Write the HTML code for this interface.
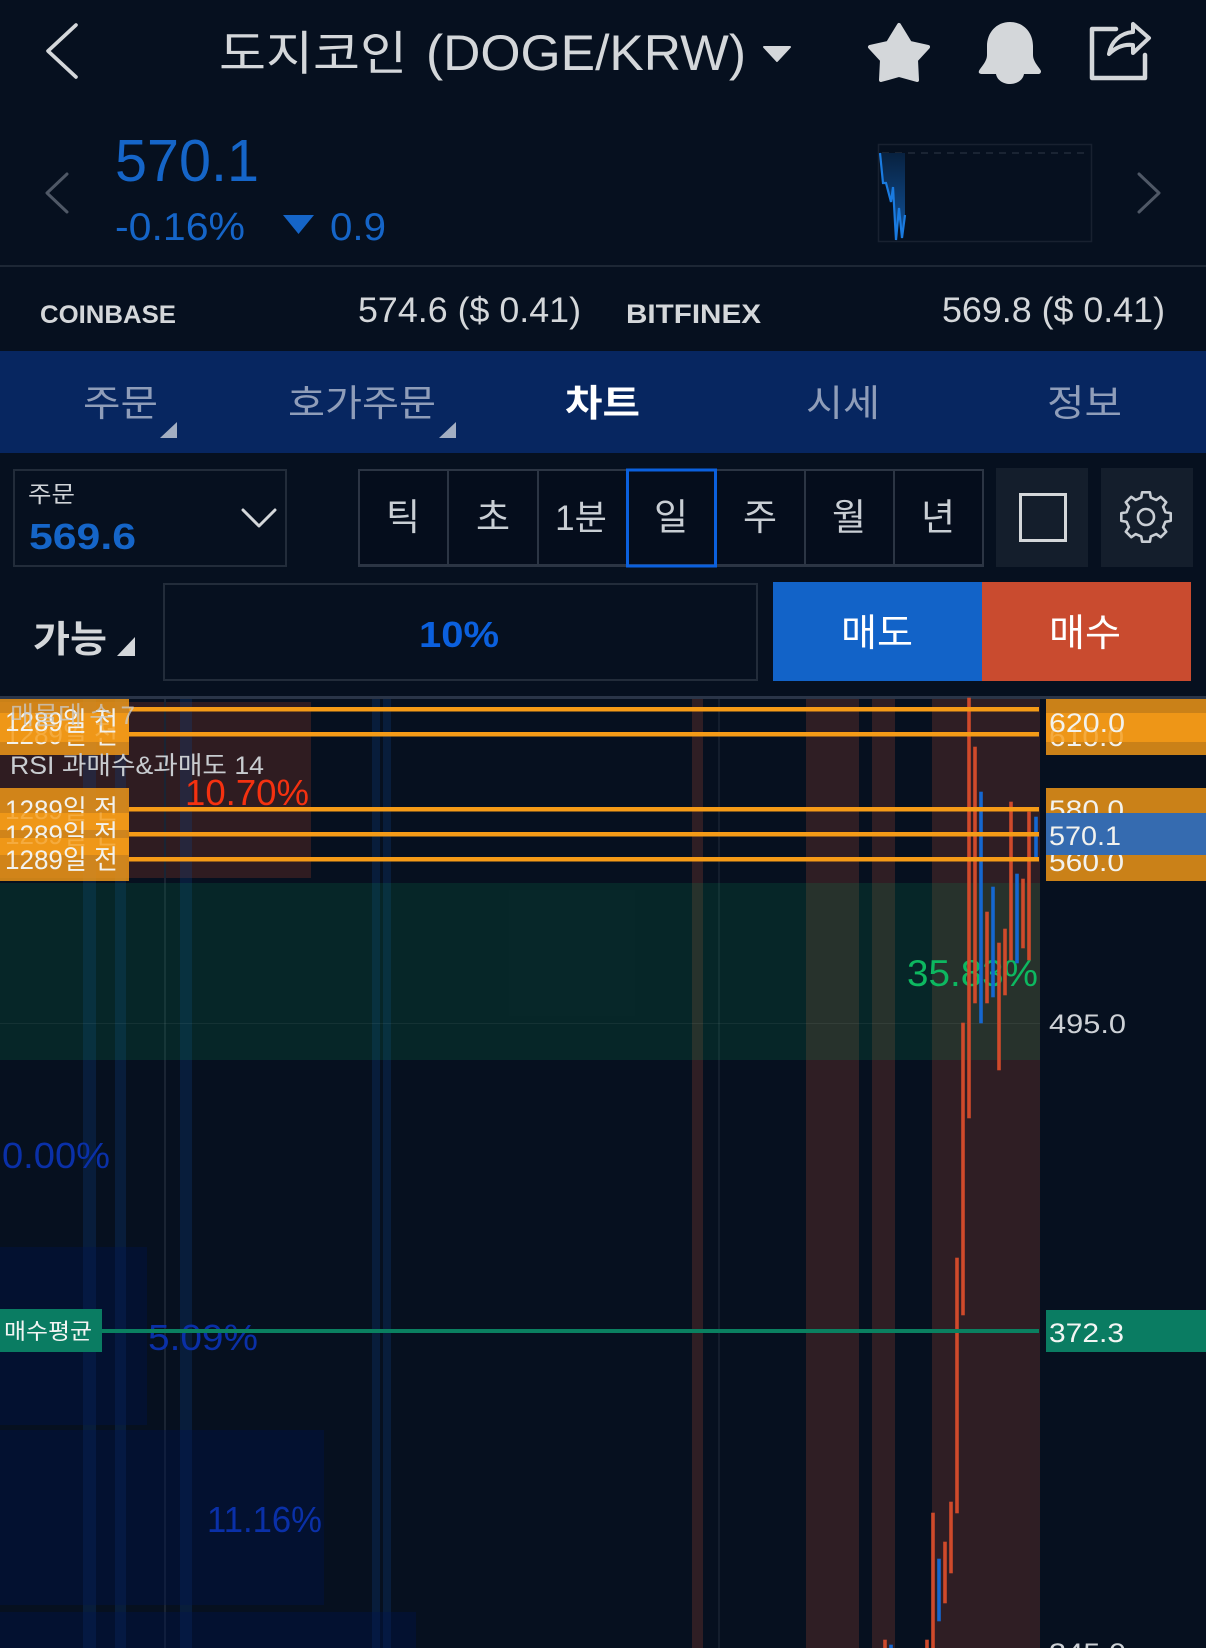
<!DOCTYPE html>
<html lang="ko"><head><meta charset="utf-8"><title>도지코인</title>
<style>
html,body{margin:0;padding:0;background:#06101f;width:1206px;height:1648px;overflow:hidden}
svg{display:block;position:absolute;left:0;top:0}
text{font-family:"Liberation Sans","Noto Sans CJK KR",sans-serif;white-space:pre}
.k{font-family:"Noto Sans CJK KR","Liberation Sans",sans-serif}
</style></head><body>
<svg width="1206" height="1648" viewBox="0 0 1206 1648" xmlns="http://www.w3.org/2000/svg">
<defs><linearGradient id="g" x1="0" y1="0" x2="0" y2="1"><stop offset="0" stop-color="#08213f"/><stop offset="1" stop-color="#11559f"/></linearGradient></defs>
<rect width="1206" height="1648" fill="#06101f"/>

<!-- header -->
<path d="M76 25 L48 51 L76 77" fill="none" stroke="#d4d7da" stroke-width="3.6" stroke-linecap="round" stroke-linejoin="round"/>
<text class="k" x="219" y="70" font-size="47" fill="#d4d7da" textLength="188" lengthAdjust="spacingAndGlyphs">도지코인</text>
<text x="426" y="70" font-size="50" fill="#d4d7da" textLength="320" lengthAdjust="spacingAndGlyphs">(DOGE/KRW)</text>
<path d="M764 47 H790 L777 61 Z" fill="#d4d7da" stroke="#d4d7da" stroke-width="2" stroke-linejoin="round"/>
<polygon points="899,25 910,43 928,47 916,60 917,80 899,75 881,80 882,60 870,47 888,43" fill="#d4d7da" stroke="#d4d7da" stroke-width="4" stroke-linejoin="round"/>
<path d="M1010 22 C1024 22 1033 33 1033 46 L1033 55 C1033 62 1040 68 1041 71 C1041 73 1040 74 1038 74 L1024 74 C1023 80 1017 84 1010 84 C1003 84 997 80 996 74 L982 74 C980 74 978 73 979 71 C980 68 987 62 987 55 L987 46 C987 33 996 22 1010 22 Z" fill="#d4d7da"/>
<path d="M1116 29 H1092 V78 H1145 V55" fill="none" stroke="#d4d7da" stroke-width="4.5" stroke-linecap="round" stroke-linejoin="round"/>
<path d="M1149 38 L1133 24 V32 C1120 33 1111 42 1109 54 C1116 47 1124 44 1133 45 V53 Z" fill="none" stroke="#d4d7da" stroke-width="4" stroke-linejoin="round"/>

<!-- price -->
<path d="M67 174 L47 193 L67 212" fill="none" stroke="#4f5866" stroke-width="3" stroke-linecap="round" stroke-linejoin="round"/>
<path d="M1139 174 L1159 193 L1139 212" fill="none" stroke="#4f5866" stroke-width="3" stroke-linecap="round" stroke-linejoin="round"/>
<text x="115" y="181" font-size="59" fill="#1565c8" textLength="144" lengthAdjust="spacingAndGlyphs">570.1</text>
<text x="115" y="240" font-size="39" fill="#1565c8" textLength="130" lengthAdjust="spacingAndGlyphs">-0.16%</text>
<polygon points="283,215 314,215 298.5,234" fill="#1565c8"/>
<text x="330" y="240" font-size="39" fill="#1565c8" textLength="56" lengthAdjust="spacingAndGlyphs">0.9</text>
<rect x="878.5" y="144.5" width="213" height="97" fill="none" stroke="#182130" stroke-width="1.5"/>
<line x1="882" y1="153" x2="1090" y2="153" stroke="#202a3a" stroke-width="1.5" stroke-dasharray="7 6"/>
<polygon points="880,153 883,183 886,183 891,202 893,187 896,240 899,208 902,238 905,215 905,153" fill="url(#g)"/>
<polyline points="880,153 883,183 886,183 891,202 893,187 896,240 899,208 902,238 905,215" fill="none" stroke="#1a7be0" stroke-width="2.2"/>

<rect x="0" y="265" width="1206" height="2" fill="#1d2735"/>
<text x="40" y="323" font-size="25" font-weight="700" fill="#d4d7da" textLength="136" lengthAdjust="spacingAndGlyphs">COINBASE</text>
<text x="358" y="322" font-size="35" fill="#d4d7da" textLength="223" lengthAdjust="spacingAndGlyphs">574.6 ($ 0.41)</text>
<text x="626" y="323" font-size="27" font-weight="700" fill="#d4d7da" textLength="135" lengthAdjust="spacingAndGlyphs">BITFINEX</text>
<text x="942" y="322" font-size="35" fill="#d4d7da" textLength="223" lengthAdjust="spacingAndGlyphs">569.8 ($ 0.41)</text>

<!-- tabs -->
<rect x="0" y="351" width="1206" height="102" fill="#072660"/>
<g font-size="37" fill="#8f9db9">
<text class="k" x="83" y="416" textLength="75" lengthAdjust="spacingAndGlyphs">주문</text>
<text class="k" x="288" y="416" textLength="148" lengthAdjust="spacingAndGlyphs">호가주문</text>
<text class="k" x="565" y="416" font-weight="700" fill="#ffffff" textLength="75" lengthAdjust="spacingAndGlyphs">차트</text>
<text class="k" x="806" y="416" textLength="74" lengthAdjust="spacingAndGlyphs">시세</text>
<text class="k" x="1047" y="416" textLength="75" lengthAdjust="spacingAndGlyphs">정보</text>
</g>
<polygon points="160,438 177,438 177,422" fill="#a3aec2"/>
<polygon points="439,438 456,438 456,422" fill="#a3aec2"/>

<!-- controls -->
<rect x="14" y="470" width="272" height="96" fill="none" stroke="#222c3a" stroke-width="2"/>
<text class="k" x="28" y="502" font-size="23" fill="#d0d4d8" textLength="47" lengthAdjust="spacingAndGlyphs">주문</text>
<text x="29" y="549" font-size="36" font-weight="700" fill="#1565c8" textLength="107" lengthAdjust="spacingAndGlyphs">569.6</text>
<path d="M243 510 L259 526 L275 510" fill="none" stroke="#d4d7da" stroke-width="3" stroke-linecap="round" stroke-linejoin="round"/>

<rect x="359" y="470" width="624" height="96" fill="#050d1c" stroke="#2c3544" stroke-width="2"/>
<g stroke="#2c3544" stroke-width="2"><line x1="448" y1="470" x2="448" y2="566"/><line x1="538" y1="470" x2="538" y2="566"/><line x1="805" y1="470" x2="805" y2="566"/><line x1="894" y1="470" x2="894" y2="566"/></g>
<rect x="359" y="564" width="624" height="3" fill="#2c3544"/>
<rect x="627.5" y="470" width="88" height="96" fill="none" stroke="#0b60de" stroke-width="3"/>
<g font-size="37" fill="#c9ced4" text-anchor="middle">
<text class="k" x="403" y="530">틱</text>
<text class="k" x="493" y="530">초</text>
<text x="581" y="530" font-size="35">1분</text>
<text class="k" x="671" y="530">일</text>
<text class="k" x="760" y="530">주</text>
<text class="k" x="849" y="530">월</text>
<text class="k" x="938" y="530">년</text>
</g>
<rect x="996" y="468" width="92" height="99" fill="#141e2c"/>
<rect x="1020.5" y="494.5" width="45" height="46" fill="none" stroke="#d4d7da" stroke-width="3"/>
<rect x="1101" y="468" width="92" height="99" fill="#141e2c"/>
<g transform="translate(1146,517)" fill="none" stroke="#c9ced4" stroke-width="2.6" stroke-linejoin="round">
<polygon points="-4.8,-19.4 -3.9,-24.7 3.9,-24.7 4.8,-19.4 10.3,-17.1 14.7,-20.2 20.2,-14.7 17.1,-10.3 19.4,-4.8 24.7,-3.9 24.7,3.9 19.4,4.8 17.1,10.3 20.2,14.7 14.7,20.2 10.3,17.1 4.8,19.4 3.9,24.7 -3.9,24.7 -4.8,19.4 -10.3,17.1 -14.7,20.2 -20.2,14.7 -17.1,10.3 -19.4,4.8 -24.7,3.9 -24.7,-3.9 -19.4,-4.8 -17.1,-10.3 -20.2,-14.7 -14.7,-20.2 -10.3,-17.1"/>
<circle r="8"/>
</g>

<text class="k" x="33" y="652" font-size="37" font-weight="700" fill="#d4d7da" textLength="74" lengthAdjust="spacingAndGlyphs">가능</text>
<polygon points="117,656 135,656 135,637" fill="#d4d7da"/>
<rect x="164" y="584" width="593" height="96" fill="none" stroke="#222c3a" stroke-width="2"/>
<text x="419" y="647" font-size="36" font-weight="700" fill="#0b60de" textLength="80" lengthAdjust="spacingAndGlyphs">10%</text>
<rect x="773" y="582" width="209" height="99" fill="#1263c8"/>
<rect x="982" y="582" width="209" height="99" fill="#c94b2f"/>
<text class="k" x="841" y="646" font-size="38" fill="#fff" textLength="72" lengthAdjust="spacingAndGlyphs">매도</text>
<text class="k" x="1049" y="646" font-size="38" fill="#fff" textLength="72" lengthAdjust="spacingAndGlyphs">매수</text>

<!-- chart -->
<rect x="0" y="696" width="1206" height="3" fill="#2a3548"/>
<rect x="0" y="702" width="311" height="176" fill="#2f1c21"/>
<g fill="#2f1e24">
<rect x="692" y="699" width="11" height="949"/>
<rect x="806" y="699" width="53" height="949"/>
<rect x="872" y="699" width="23" height="949"/>
<rect x="932" y="699" width="108" height="949"/>
</g>
<g fill="#0f468c" fill-opacity=".26">
<rect x="83" y="699" width="13" height="949"/>
<rect x="115" y="699" width="11" height="949"/>
<rect x="180" y="699" width="12" height="949"/>
<rect x="372" y="699" width="8" height="949"/>
<rect x="383" y="699" width="8" height="949"/>
</g>
<rect x="164" y="699" width="2" height="949" fill="#1a2433"/>
<rect x="718" y="699" width="2" height="949" fill="#141e2d"/>
<rect x="0" y="883" width="1040" height="177" fill="#0a8250" fill-opacity=".2"/>
<rect x="0" y="1023" width="1040" height="1" fill="#ffffff" fill-opacity=".06"/>
<g fill="#001550" fill-opacity=".35">
<rect x="0" y="1247" width="147" height="178"/>
<rect x="0" y="1430" width="324" height="175"/>
<rect x="0" y="1612" width="416" height="36"/>
</g>

<text x="2" y="1168" font-size="36" fill="#0a30a8" textLength="108" lengthAdjust="spacingAndGlyphs">0.00%</text>
<text x="148" y="1350" font-size="36" fill="#0a30a8" textLength="110" lengthAdjust="spacingAndGlyphs">5.09%</text>
<text x="207" y="1532" font-size="36" fill="#0a30a8" textLength="115" lengthAdjust="spacingAndGlyphs">11.16%</text>
<text x="907" y="986" font-size="37" fill="#0db860" textLength="131" lengthAdjust="spacingAndGlyphs">35.83%</text>

<!-- candles -->
<g fill="#cf4a2b" stroke="#cf4a2b" stroke-width=".6">
<rect x="967.5" y="698" width="3" height="420"/>
<rect x="973.5" y="747" width="3" height="256"/>
<rect x="985.5" y="912" width="3" height="91"/>
<rect x="997.5" y="943" width="3" height="127"/>
<rect x="1003.5" y="929" width="3" height="66"/>
<rect x="1009.5" y="802" width="3" height="158"/>
<rect x="1021.5" y="879" width="3" height="69"/>
<rect x="1027.5" y="812" width="3" height="148"/>
<rect x="961.5" y="1023" width="3" height="292"/>
<rect x="955.5" y="1258" width="3" height="255"/>
<rect x="949.5" y="1502" width="3" height="71"/>
<rect x="943.5" y="1542" width="3" height="61"/>
<rect x="931.5" y="1513" width="3" height="135"/>
<rect x="925.5" y="1640" width="3" height="8"/>
<rect x="883.5" y="1640" width="3" height="8"/>
</g>
<g fill="#1567d0" stroke="#1567d0" stroke-width=".6">
<rect x="979.5" y="792" width="3" height="231"/>
<rect x="991.5" y="887" width="3" height="110"/>
<rect x="1015.5" y="874" width="3" height="89"/>
<rect x="1034.5" y="817" width="3" height="42"/>
<rect x="937.5" y="1559" width="3" height="62"/>
<rect x="889.5" y="1645" width="3" height="3"/>
</g>

<!-- lines -->
<g fill="#f59b17">
<rect x="129" y="707" width="910" height="4.5"/>
<rect x="129" y="732" width="910" height="4.5"/>
<rect x="129" y="807" width="910" height="4.5"/>
<rect x="129" y="832" width="910" height="4.5"/>
<rect x="129" y="857" width="910" height="4.5"/>
</g>
<rect x="102" y="1329" width="937" height="4" fill="#0a8060"/>

<!-- left labels -->
<g font-size="27" fill="#f2f2ee">
<rect x="0" y="713" width="129" height="42" fill="#f59b17" fill-opacity=".82"/>
<text x="5" y="744" textLength="113" lengthAdjust="spacingAndGlyphs">1289일 전</text>
<rect x="0" y="699" width="129" height="43" fill="#f59b17" fill-opacity=".82"/>
<text x="5" y="731" textLength="113" lengthAdjust="spacingAndGlyphs">1289일 전</text>
<rect x="0" y="788" width="129" height="42" fill="#f59b17" fill-opacity=".82"/>
<text x="5" y="819" textLength="113" lengthAdjust="spacingAndGlyphs">1289일 전</text>
<rect x="0" y="813" width="129" height="42" fill="#f59b17" fill-opacity=".82"/>
<text x="5" y="844" textLength="113" lengthAdjust="spacingAndGlyphs">1289일 전</text>
<rect x="0" y="838" width="129" height="43" fill="#f59b17" fill-opacity=".82"/>
<text x="5" y="869" textLength="113" lengthAdjust="spacingAndGlyphs">1289일 전</text>
</g>
<text x="10" y="724" font-size="25" fill="#c8ccd0" fill-opacity=".75" textLength="125" lengthAdjust="spacingAndGlyphs">매물대 수 7</text>
<text x="10" y="774" font-size="25" fill="#c8ccd0" textLength="254" lengthAdjust="spacingAndGlyphs">RSI 과매수&amp;과매도 14</text>
<text x="185" y="805" font-size="36" fill="#f53110" textLength="124" lengthAdjust="spacingAndGlyphs">10.70%</text>
<rect x="0" y="1309" width="102" height="43" fill="#0a7c62"/>
<text class="k" x="4" y="1339" font-size="22" fill="#f2f5f3" textLength="88" lengthAdjust="spacingAndGlyphs">매수평균</text>

<!-- right labels -->
<g font-size="27" fill="#f2f2ee">
<rect x="1046" y="713" width="160" height="42" fill="#f59b17" fill-opacity=".82"/>
<text x="1049" y="746" textLength="75" lengthAdjust="spacingAndGlyphs">610.0</text>
<rect x="1046" y="699" width="160" height="43" fill="#f59b17" fill-opacity=".82"/>
<text x="1049" y="732" textLength="76" lengthAdjust="spacingAndGlyphs">620.0</text>
<rect x="1046" y="788" width="160" height="42" fill="#f59b17" fill-opacity=".82"/>
<text x="1049" y="819" textLength="75" lengthAdjust="spacingAndGlyphs">580.0</text>
<rect x="1046" y="838" width="160" height="43" fill="#f59b17" fill-opacity=".82"/>
<text x="1049" y="871" textLength="75" lengthAdjust="spacingAndGlyphs">560.0</text>
<rect x="1046" y="813" width="160" height="42" fill="#356bb0"/>
<text x="1049" y="845" textLength="72" lengthAdjust="spacingAndGlyphs">570.1</text>
</g>
<text x="1049" y="1033" font-size="27" fill="#cdd1d6" textLength="77" lengthAdjust="spacingAndGlyphs">495.0</text>
<rect x="1046" y="1310" width="160" height="42" fill="#0a7c62"/>
<text x="1049" y="1342" font-size="27" fill="#f2f5f3" textLength="75" lengthAdjust="spacingAndGlyphs">372.3</text>
<text x="1049" y="1662" font-size="27" fill="#cdd1d6" textLength="77" lengthAdjust="spacingAndGlyphs">345.0</text>
</svg>
</body></html>
